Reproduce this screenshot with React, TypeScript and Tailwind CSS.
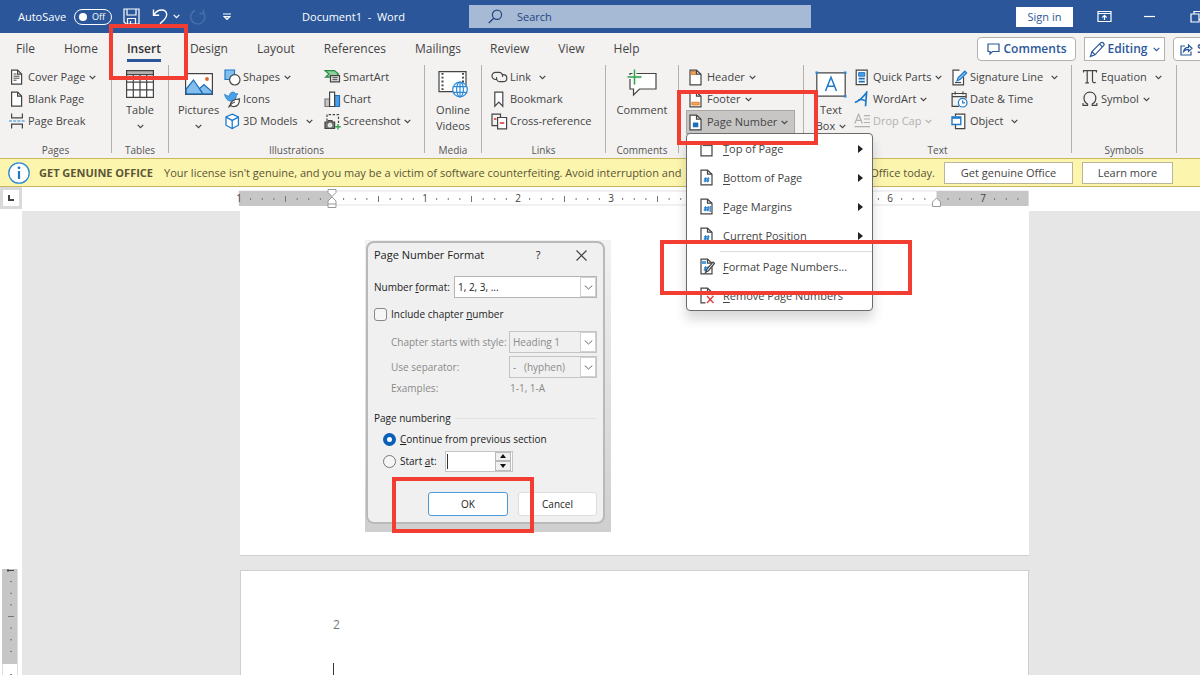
import type { ReactNode } from 'react';
import clsx from 'clsx';

const TABS = ['File', 'Home', 'Insert', 'Design', 'Layout', 'References', 'Mailings', 'Review', 'View', 'Help'];

// One inch on the ruler, in px, at the current zoom level.
const INCH = 93;

function Svg({ w, h, children, className }: { w: number; h: number; children: ReactNode; className?: string }) {
  return (
    <svg
      width={w}
      height={h}
      viewBox={`0 0 ${w} ${h}`}
      fill="none"
      stroke="#444"
      strokeWidth="1.2"
      className={clsx('shrink-0', className)}
      aria-hidden="true"
    >
      {children}
    </svg>
  );
}

function Chevron({ className }: { className?: string }) {
  return (
    <svg width="7" height="5" viewBox="0 0 7 5" fill="none" stroke="currentColor" strokeWidth="1.2" className={clsx('shrink-0', className)} aria-hidden="true">
      <path d="M0.7 0.9 3.5 3.7 6.3 0.9" />
    </svg>
  );
}

/* ---------- small ribbon icons ---------- */

function PageOutline() {
  return (
    <>
      <path d="M2.6 1.1h6l4 4v10h-10z" fill="#fff" />
      <path d="M8.6 1.1v4h4" />
    </>
  );
}

const CoverIcon = () => (
  <Svg w={16} h={16}>
    <PageOutline />
    <path d="M4.5 5h3M4.5 7.2h6M4.5 9.2h6M4.5 11.2h3" strokeWidth="1" />
  </Svg>
);

const BlankIcon = () => (
  <Svg w={16} h={16}>
    <PageOutline />
  </Svg>
);

const BreakIcon = () => (
  <Svg w={16} h={16}>
    <path d="M2.6 0.5v4.4h10.8V0.5M2.6 15.5v-4.4h10.8v4.4" />
    <path d="M0 8h16" stroke="#2b88d8" strokeDasharray="3 1.2" />
  </Svg>
);

const ShapesIcon = () => (
  <Svg w={17} h={17}>
    <path d="M1 1h9.5v9.5H1z" fill="#83beec" stroke="#1e7ac9" />
    <circle cx="10.8" cy="10.8" r="5.2" fill="#fff" />
  </Svg>
);

const IconsIcon = () => (
  <Svg w={17} h={17}>
    <path d="M0.6 3.2c1.6 1.6 3.4 2 5 1.7C5.4 2.6 7 1 9 1.1c1.3.1 2.2.7 2.7 1.6l2.3.2-1.7 1.7c0 3.4-2.4 5.4-5.6 5.4-2.8 0-5-2.2-6.1-6.6z" fill="#4ba0e8" stroke="#1e7ac9" strokeWidth="0.8" />
    <path d="M6 15.5c0-5 3-7.5 9.500-7.700.2 5-2 7.800-6 7.800-1.600 0-2.700-.8-3-2z" fill="#fff" />
    <path d="M4.500 16.500c1.500-3 3.500-4.600 6.500-5.500" />
  </Svg>
);

const CubeIcon = () => (
  <Svg w={17} h={17}>
    <path d="M8.200 1.200 14.400 4v8.200l-6.200 3.300L2 12.200V4z" fill="#fff" stroke="#1e7ac9" strokeWidth="1.300" />
    <path d="M2 4.200l6.200 3.200 6.200-3.200M8.200 7.400v8" stroke="#1e7ac9" strokeWidth="1.300" />
  </Svg>
);

const SmartArtIcon = () => (
  <Svg w={17} h={16}>
    <path d="M1 1.600h9.500l4 3.400-4 3.200H1.600L5 5z" fill="#8fd19e" stroke="#2c8c45" />
    <path d="M6.500 6.600h9v6.200h-9z" fill="#e6e6e6" />
    <path d="M8.500 8.700h5M8.500 10.700h5" strokeWidth="1" />
  </Svg>
);

const ChartIcon = () => (
  <Svg w={17} h={17}>
    <path d="M1 8h4.500v7.500H1z" fill="#c8c6c4" stroke="#777" />
    <path d="M10.500 4.500h5v11h-5z" fill="#4ba0e8" stroke="#1e6fb8" />
    <path d="M5.600 1.200h5v14.300h-5z" fill="#fff" />
  </Svg>
);

const ScreenshotIcon = () => (
  <Svg w={17} h={17}>
    <path d="M3 8V1.600h11.500V10" strokeDasharray="2.400 1.600" />
    <path d="M1 9.200h2.500l1-1.500h3.400l1 1.500h1.700v6.300H1z" fill="#777" />
    <circle cx="6" cy="12.200" r="1.900" fill="#ddd" stroke="#fff" strokeWidth="0.800" />
    <path d="M14 11v5.500M11.300 13.800h5.500" stroke="#2ea44f" strokeWidth="1.400" />
  </Svg>
);

const LinkIcon = () => (
  <Svg w={17} h={14}>
    <path d="M6 9.500H4.600a3.600 3.600 0 0 1 0-7.200h3.600a3.600 3.600 0 0 1 3.300 4.600" />
    <path d="M11 4.700h1.300a3.500 3.500 0 0 1 0 7H8.800a3.500 3.500 0 0 1-3.200-4.500" />
  </Svg>
);

const BookmarkIcon = () => (
  <Svg w={17} h={17}>
    <path d="M3.800 1.200h8v14l-4-4-4 4z" fill="#fff" />
  </Svg>
);

const CrossRefIcon = () => (
  <Svg w={17} h={17}>
    <path d="M6.500 12.600H1V1.200h8.500v3" />
    <path d="M6.600 4.500h9v11.300h-9z" fill="#fff" />
    <path d="M3 6h2.500M8.800 10h4.500" stroke="#d13438" strokeWidth="1.300" />
  </Svg>
);

const HeaderIcon = () => (
  <Svg w={16} h={17}>
    <path d="M2 1.200h6.500l4.500 4v10.600H2z" fill="#fff" />
    <path d="M3 2.500h4.800v3H3z" fill="#f2a65a" stroke="#e0761f" strokeWidth="0.800" />
    <path d="M8.500 1.200v4H13" />
  </Svg>
);

const FooterIcon = () => (
  <Svg w={16} h={17}>
    <path d="M2 1.200h6.500l4.500 4v10.600H2z" fill="#fff" />
    <path d="M8.500 1.200v4H13" />
    <path d="M3.800 11.200h7.400v2.800H3.800z" fill="#f2a65a" stroke="#e0761f" strokeWidth="0.800" />
  </Svg>
);

function HashPageIcon({ children }: { children?: ReactNode }) {
  return (
    <Svg w={16} h={17}>
      <path d="M2 1.200h6.500l4.500 4v10.600H2z" fill="#fff" />
      <path d="M8.500 1.200v4H13" />
      <path d="M6.700 8.300l-.6 5M9.300 8.300l-.6 5M5 9.800h5.400M4.700 11.800h5.400" stroke="#1e7ac9" />
      {children}
    </Svg>
  );
}

// The filled variant that the ribbon shows on its own button.
const PageNumberIcon = () => (
  <Svg w={16} h={17}>
    <path d="M2 1.200h6.500l4.500 4v10.600H2z" fill="#fff" />
    <path d="M8.500 1.200v4H13" />
    <path d="M5.600 9h4v3.600h-4zM4.800 10h5.600M4.800 11.800h5.600" fill="#1e6fb8" stroke="#1e6fb8" />
  </Svg>
);

const TopPageIcon = () => (
  <Svg w={16} h={17}>
    <path d="M2 3.200h6.500l4.500 1v11.600H2z" fill="#fff" />
    <path d="M4 3.200v2.400h9" strokeWidth="1" />
  </Svg>
);

const RemoveIcon = () => (
  <Svg w={16} h={17}>
    <path d="M6.500 15.800H2V1.200h6.500l4.500 4v3" />
    <path d="M8.500 1.200v4H13" />
    <path d="M8 9l6.500 7M14.500 9 8 16" stroke="#e03a3a" strokeWidth="1.300" />
  </Svg>
);

const QuickPartsIcon = () => (
  <Svg w={16} h={17}>
    <path d="M2.200 1.200h11v14.500h-11z" fill="#fff" />
    <path d="M4.600 3.600h6.200v3.600H4.600z" fill="#4ba0e8" stroke="#1e6fb8" strokeWidth="0.900" />
    <path d="M4.600 9.600h6.200M4.600 12.600h6.200" stroke="#1e6fb8" strokeWidth="1.600" />
  </Svg>
);

const WordArtIcon = () => (
  <Svg w={16} h={17}>
    <path d="M0.800 11.500C4.500 10.500 9.500 5.500 12.600 1.500L11.500 15.200" stroke="#1e7ac9" strokeWidth="1.700" />
    <path d="M4.200 9c2.500-.8 5-.6 7.800 1.200" stroke="#1e7ac9" strokeWidth="1.500" />
  </Svg>
);

const DropCapIcon = () => (
  <Svg w={17} h={16}>
    <path d="M0.800 10.500 4.600 1.300 8.400 10.500M2.200 7.300h4.800M10 2.600h6M10 6h6M10 9.500h6M0.500 13.600H16" stroke="#b3b0ad" />
  </Svg>
);

const SignatureIcon = () => (
  <Svg w={17} h={17}>
    <path d="M12.500 8v7.800H2V1.200h6.500" fill="#fff" />
    <path d="M4 13.500h6" />
    <path d="M6 11.800l1.200-3.300 6.600-6.300 1.800 1.800-6.500 6.600z" fill="#83beec" stroke="#1e7ac9" />
  </Svg>
);

const DateIcon = () => (
  <Svg w={17} h={17}>
    <path d="M8 15.300H1.100V2.500h14v5M1.100 5.600h14M4.200 0.500v3M12 0.500v3" />
    <circle cx="11.700" cy="11.700" r="4.300" fill="#fff" stroke="#1e7ac9" />
    <path d="M11.700 9.300v2.600h2.200" stroke="#1e7ac9" />
  </Svg>
);

const ObjectIcon = () => (
  <Svg w={17} h={17}>
    <path d="M4.500 3V1.200h9.300v14.500H4.500V12" fill="#fff" />
    <path d="M1 4h8.800v7.500H1z" fill="#fff" stroke="#1e7ac9" strokeWidth="1.400" />
    <path d="M1 4.800h8.800" stroke="#1e7ac9" strokeWidth="2" />
  </Svg>
);

const EquationIcon = () => (
  <Svg w={16} h={16}>
    <path d="M1.500 3.500V1.600h13v1.900M5.200 1.600v11.800M3.300 13.800h3.600M10.500 1.600v10.400c0 1.500 1.400 2 3.200 1.400" />
  </Svg>
);

const SymbolIcon = () => (
  <Svg w={16} h={16}>
    <path d="M1 12v2.300h4.600v-1.200C3 11.600 2 9.600 2 7.200 2 3.700 4.400 1.100 7.900 1.100s5.900 2.600 5.900 6.100c0 2.400-1 4.400-3.600 5.900v1.200h4.600V12" />
  </Svg>
);

/* ---------- large ribbon icons ---------- */

const TableIcon = () => (
  <Svg w={28} h={28}>
    <path d="M0.600 0.600h26.800v26.800H0.600z" fill="#fff" />
    <path d="M0.600 0.600h26.800v4H0.600z" fill="#b5b3b1" />
    <path d="M0.600 12.200h26.800M0.600 19.800h26.800M7.300 4.600v22.800M14 4.600v22.800M20.700 4.600v22.800" />
  </Svg>
);

const PicturesIcon = () => (
  <Svg w={28} h={22}>
    <path d="M0.600 0.600h26.800v20.800H0.600z" fill="#fff" />
    <path d="M1.200 16 8.500 7l9.500 13.800H1.200z" fill="#83beec" stroke="#1e6fb8" />
    <path d="M14.500 15.500 19 11.500l7.800 7v2.300H18z" fill="#83beec" stroke="#1e6fb8" />
    <circle cx="22" cy="6" r="1.900" fill="#e0642a" stroke="none" />
  </Svg>
);

const VideoIcon = () => (
  <Svg w={30} h={28}>
    <path d="M1 1.600h27v20H1z" fill="#fff" />
    <path d="M4.500 3v17M25 3v10" strokeDasharray="1.800 2" strokeWidth="2" />
    <circle cx="22" cy="19.500" r="7.300" fill="#fff" stroke="#2b88d8" />
    <ellipse cx="22" cy="19.500" rx="3.400" ry="7.300" stroke="#2b88d8" />
    <path d="M15.600 16.600h12.800M15.600 22.400h12.800M22 12v15" stroke="#2b88d8" />
  </Svg>
);

const CommentIcon = () => (
  <Svg w={31} h={30}>
    <path d="M3 4.500h26V20H12.500L6.500 26V20H3z" fill="#fff" />
    <path d="M7.500 0.500v15M0.500 8h14" stroke="#f3f2f1" strokeWidth="4" />
    <path d="M7.500 0.500v15M0.500 8h14" stroke="#2ea44f" strokeWidth="1.400" />
  </Svg>
);

const TextBoxIcon = () => (
  <Svg w={32} h={27}>
    <path d="M1.800 1.800h28.400v23.400H1.800z" fill="#fff" />
    <path d="M10.500 20 16 6.200 21.500 20M12.400 15.300h7.200" stroke="#1e7ac9" strokeWidth="1.500" />
    <path d="M0.500 0.500h2.600v2.600H0.500zM28.900 0.500h2.600v2.600h-2.600zM0.500 23.900h2.600v2.600H0.500zM28.900 23.900h2.600v2.600h-2.600z" fill="#2b88d8" stroke="none" />
  </Svg>
);

/* ---------- ribbon building blocks ---------- */

function Group({ label, className, children }: { label: string; className?: string; children: ReactNode }) {
  return (
    <section aria-label={label} className={clsx('flex h-[92px] shrink-0 flex-col', className)}>
      <div className="relative flex h-[88px] border-r border-[#b3b1af] pt-px">
        {children}
        <span className="absolute inset-x-0 -bottom-1 text-center text-[10px] leading-[14px] text-[#555]">{label}</span>
      </div>
    </section>
  );
}

interface ToolProps {
  icon: ReactNode;
  label: string;
  menu?: boolean;
  wide?: boolean;
  disabled?: boolean;
}

function Tool({ icon, label, menu, wide, disabled }: ToolProps) {
  return (
    <button
      disabled={disabled}
      className={clsx('flex h-[22px] items-center whitespace-nowrap', disabled ? 'text-[#b3b0ad]' : 'text-[#444]')}
    >
      <span className="flex w-[19px] justify-start">{icon}</span>
      {label}
      {menu && <Chevron className={wide ? 'ml-2' : 'ml-1'} />}
    </button>
  );
}

function BigTool({ icon, children, menu }: { icon: ReactNode; children: ReactNode; menu?: boolean }) {
  return (
    <button className="flex w-full flex-col items-center self-start text-center leading-4 text-[#444]">
      <span className="flex h-9 items-center justify-center">{icon}</span>
      {children}
      {menu && <Chevron className="mt-1.5" />}
    </button>
  );
}

/* ---------- page parts ---------- */

function TitleBar() {
  return (
    <header className="flex h-[33px] shrink-0 items-center overflow-hidden bg-[#2b579a] text-white">
      <div className="flex w-[469px] shrink-0 items-center pl-[18px]">
        <label className="flex items-center gap-2" htmlFor="autosave">
          AutoSave
          <span className="relative flex h-4 w-[38px] items-center justify-between rounded-full border border-white pl-1 pr-1.5 text-[9px] leading-none">
            <input id="autosave" type="checkbox" className="absolute inset-0 m-0 appearance-none" />
            <span className="h-2 w-2 rounded-full bg-white" />
            Off
          </span>
        </label>
        <button aria-label="Save" className="ml-[11px]">
          <Svg w={17} h={17}>
            <path d="M1 1h15v15H3l-2-2zM4 1v6h9V1M4.500 16v-5.500h8V16M7.500 13v3" stroke="#fff" />
          </Svg>
        </button>
        <button aria-label="Undo" className="ml-3">
          <Svg w={16} h={17}>
            <path d="M1.500 1.500v5.700h5.700M1.800 7C4 3.400 6.500 2 9.500 2c3.200 0 5.200 2 5.200 4.800 0 2-1.200 3.600-2.500 4.900L8 15.800" stroke="#fff" strokeWidth="1.400" />
          </Svg>
        </button>
        <Chevron className="ml-[5px]" />
        <button aria-label="Redo" disabled className="ml-2.5">
          <Svg w={17} h={17}>
            <path d="M13.500 1.500v4h-4M5 2.500A7 7 0 1 0 13.500 5" stroke="#4a70ad" strokeWidth="1.400" />
          </Svg>
        </button>
        <button aria-label="Customize toolbar" className="ml-4">
          <Svg w={8} h={8}>
            <path d="M0 1h8M1.200 3.600h5.600L4 6.500z" stroke="#fff" />
          </Svg>
        </button>
        <span className="ml-[71px] whitespace-pre">Document1  -  Word</span>
      </div>
      <label className="flex h-[23px] flex-1 items-center bg-[#a6b9d5] pl-[19px] text-[#24477f]">
        <Svg w={15} h={15}>
          <circle cx="9" cy="5.800" r="4.600" stroke="#24477f" />
          <path d="M5.700 9.200.8 14" stroke="#24477f" strokeWidth="1.400" />
        </Svg>
        <input aria-label="Search" placeholder="Search" className="ml-3.5 w-full bg-transparent outline-none placeholder:text-[#24477f]" />
      </label>
      <div className="flex w-[389px] shrink-0 items-center justify-end">
        <button className="h-5 w-[57px] shrink-0 bg-white text-[#2b579a]">Sign in</button>
        <button aria-label="Ribbon display options" className="ml-6 shrink-0">
          <Svg w={15} h={13}>
            <path d="M1 1.500h13v10H1zM1 3.500h13M7.500 10V5.500M5.200 7.600l2.300-2.200 2.300 2.200" stroke="#fff" />
          </Svg>
        </button>
        <button aria-label="Minimize" className="ml-8 shrink-0">
          <Svg w={12} h={3}>
            <path d="M0 1.500h11" stroke="#fff" />
          </Svg>
        </button>
        <button aria-label="Restore" className="ml-[34px] w-2.5 shrink-0 overflow-hidden">
          <Svg w={13} h={13}>
            <path d="M1 4h8v8H1zM4 4V1.500h8v8H9" stroke="#fff" />
          </Svg>
        </button>
      </div>
    </header>
  );
}

function TabRow() {
  return (
    <div className="flex h-8 shrink-0 items-center overflow-hidden">
      <nav className="flex shrink-0 gap-[29px] pl-4 text-xs text-[#444]">
        {TABS.map((tab) => (
          <a
            key={tab}
            href={`#${tab.toLowerCase()}`}
            className={clsx('flex h-[26px] items-center border-y-[3px] border-transparent', tab === 'Insert' && 'border-b-[#2b579a] font-semibold text-[#333]')}
          >
            {tab}
          </a>
        ))}
      </nav>
      <div className="ml-auto flex w-[223px] shrink-0 gap-2 overflow-hidden text-xs font-semibold text-[#2b579a]">
        <button className="flex h-6 w-[99px] shrink-0 items-center justify-center gap-1 rounded border border-[#b3b1af] bg-white">
          <Svg w={13} h={12}>
            <path d="M1 1h11v7.500H5.500L3 11V8.500H1z" stroke="#2b579a" />
          </Svg>
          Comments
        </button>
        <button className="flex h-6 w-[81px] shrink-0 items-center justify-center gap-0.5 border border-[#b3b1af] bg-white">
          <Svg w={17} h={17}>
            <path d="M1.500 15.500 3 10.500 11.800 1.700q1.300-1 2.600.3t.2 2.600L6 13.800zM3 10.500l3 3.300M10.500 3l2.800 2.800" stroke="#2b579a" />
          </Svg>
          Editing
          <Chevron className="ml-1" />
        </button>
        <button className="flex h-6 w-[80px] shrink-0 items-center gap-1 rounded border border-[#b3b1af] bg-white pl-1.5">
          <Svg w={13} h={13}>
            <path d="M5 3H1v9h10V8.500M3.500 8.500C4 5.500 6 4.300 8.500 4.300V2l3.500 3.300L8.500 8.500V6.300c-2 0-3.500.5-5 2.200z" stroke="#2b579a" />
          </Svg>
          Share
        </button>
      </div>
    </div>
  );
}

const MENU = [
  { icon: <TopPageIcon />, label: 'Top of Page', sub: true },
  { icon: <HashPageIcon />, label: 'Bottom of Page', sub: true },
  { icon: <HashPageIcon><path d="M11.200 8v6" stroke="#1e7ac9" /></HashPageIcon>, label: 'Page Margins', sub: true },
  { icon: <HashPageIcon />, label: 'Current Position', sub: true },
  {
    icon: (
      <HashPageIcon>
        <path d="M3 3h4v3H3z" fill="#4ba0e8" stroke="none" />
        <path d="M6.500 14.500 8 11l6-7 1.500 1.300-5.800 7.200z" fill="#fff" />
      </HashPageIcon>
    ),
    label: 'Format Page Numbers...',
    sub: false,
  },
  { icon: <RemoveIcon />, label: 'Remove Page Numbers', sub: false },
];

function PageNumberMenu() {
  return (
    <ul role="menu" className="absolute left-[7px] top-[68px] z-10 w-[187px] rounded border border-[#6b6b6b] bg-white text-[#444] shadow-[0_8px_12px_rgba(0,0,0,0.16)]">
      {MENU.map((item, i) => (
        <li key={item.label} role="none" className={clsx(i === 4 && 'mt-0.5')}>
          {i === 4 && <div className="-mt-px ml-[33px] border-t border-[#dcdcdc]" />}
          <button role="menuitem" className="flex h-[29px] w-full items-center pl-3">
            <span className="w-6">{item.icon}</span>
            <span className="whitespace-nowrap">
              <u className="underline-offset-2">{item.label[0]}</u>
              {item.label.slice(1)}
            </span>
            {item.sub && (
              <svg width="5" height="8" viewBox="0 0 5 8" className="ml-auto mr-[9px]" aria-hidden="true">
                <path d="M0 0l5 4-5 4z" fill="#222" />
              </svg>
            )}
          </button>
        </li>
      ))}
    </ul>
  );
}

function Ribbon() {
  return (
    <div className="flex h-[93px] shrink-0">
      <Group label="Pages" className="w-[112px]">
        <div className="pl-[9px]">
          <Tool icon={<CoverIcon />} label="Cover Page" menu />
          <Tool icon={<BlankIcon />} label="Blank Page" />
          <Tool icon={<BreakIcon />} label="Page Break" />
        </div>
      </Group>
      <Group label="Tables" className="w-[57px]">
        <BigTool icon={<TableIcon />} menu>Table</BigTool>
      </Group>
      <Group label="Illustrations" className="w-64">
        <div className="w-[55px] pl-1">
          <BigTool icon={<PicturesIcon />} menu>Pictures</BigTool>
        </div>
        <div className="w-[100px]">
          <Tool icon={<ShapesIcon />} label="Shapes" menu />
          <Tool icon={<IconsIcon />} label="Icons" />
          <Tool icon={<CubeIcon />} label="3D Models" menu wide />
        </div>
        <div>
          <Tool icon={<SmartArtIcon />} label="SmartArt" />
          <Tool icon={<ChartIcon />} label="Chart" />
          <Tool icon={<ScreenshotIcon />} label="Screenshot" menu />
        </div>
      </Group>
      <Group label="Media" className="w-[57px]">
        <BigTool icon={<VideoIcon />}>
          <span>Online</span>
          <span>Videos</span>
        </BigTool>
      </Group>
      <Group label="Links" className="w-[124px]">
        <div className="pl-[9px]">
          <Tool icon={<LinkIcon />} label="Link" menu wide />
          <Tool icon={<BookmarkIcon />} label="Bookmark" />
          <Tool icon={<CrossRefIcon />} label="Cross-reference" />
        </div>
      </Group>
      <Group label="Comments" className="w-[73px]">
        <BigTool icon={<CommentIcon />}>Comment</BigTool>
      </Group>
      <Group label="Header & Footer" className="w-[125px]">
        <div className="pl-[7px]">
          <div className="pl-0.5">
            <Tool icon={<HeaderIcon />} label="Header" menu />
            <Tool icon={<FooterIcon />} label="Footer" menu />
          </div>
          <div className="border border-[#a8a6a4] bg-[#c8c6c4] pl-px pr-1.5">
            <Tool icon={<PageNumberIcon />} label="Page Number" menu />
          </div>
        </div>
        <PageNumberMenu />
      </Group>
      <Group label="Text" className="w-[268px]">
        <div className="w-[50px] pl-1">
          <BigTool icon={<TextBoxIcon />}>
            <span>Text</span>
            <span className="flex items-center gap-1">
              Box <Chevron />
            </span>
          </BigTool>
        </div>
        <div className="w-[97px]">
          <Tool icon={<QuickPartsIcon />} label="Quick Parts" menu />
          <Tool icon={<WordArtIcon />} label="WordArt" menu />
          <Tool icon={<DropCapIcon />} label="Drop Cap" menu disabled />
        </div>
        <div>
          <Tool icon={<SignatureIcon />} label="Signature Line" menu wide />
          <Tool icon={<DateIcon />} label="Date & Time" />
          <Tool icon={<ObjectIcon />} label="Object" menu wide />
        </div>
      </Group>
      <Group label="Symbols" className="w-[105px]">
        <div className="pl-2.5">
          <Tool icon={<EquationIcon />} label="Equation" menu wide />
          <Tool icon={<SymbolIcon />} label="Symbol" menu />
        </div>
      </Group>
    </div>
  );
}

function LicenseBar() {
  return (
    <div className="flex h-[29px] shrink-0 items-center overflow-hidden border-y border-[#c8b75e] bg-[#fcf5ae] pl-2 text-[#5a5636]">
      <svg width="22" height="22" viewBox="0 0 22 22" className="shrink-0" aria-hidden="true">
        <circle cx="11" cy="11" r="10.200" fill="#fff" stroke="#2b88d8" strokeWidth="1.300" />
        <path d="M11 9v8" stroke="#1e7ac9" strokeWidth="2.200" />
        <circle cx="11" cy="5.800" r="1.400" fill="#1e7ac9" />
      </svg>
      <strong className="ml-[9px] w-[125px] shrink-0 whitespace-nowrap font-bold">GET GENUINE OFFICE</strong>
      <p className="flex w-[771px] shrink-0 justify-between whitespace-nowrap">
        <span>Your license isn't genuine, and you may be a victim of software counterfeiting. Avoid interruption and</span>
        <span>keep your files safe with genuine Office today.</span>
      </p>
      <button className="ml-[9px] h-[22px] w-[129px] shrink-0 border border-[#b9b59a] bg-white text-[#444]">Get genuine Office</button>
      <button className="ml-[9px] h-[22px] w-[91px] shrink-0 border border-[#b9b59a] bg-white text-[#444]">Learn more</button>
    </div>
  );
}

function HorizontalRuler() {
  const ticks = Array.from({ length: 67 }, (_, i) => i - 7).filter((i) => i !== 0 && i !== 52);
  return (
    <svg width="800" height="24" className="ml-[212px]" aria-hidden="true">
      <g transform="translate(98 0)">
        <path d={`M${-INCH} 4h789v14h-789z`} fill="#fff" stroke="#e3e3e3" />
        <path d={`M${-INCH} 4H0v15h${-INCH}zM${INCH * 6.5} 4h92v15h-92z`} fill="#c6c6c6" />
        {ticks.map((i) => {
          const x = (i * INCH) / 8;
          if (i % 8 === 0) {
            return (
              <text key={i} x={x} y="15" textAnchor="middle" fontSize="10" fill="#444">
                {Math.abs(i / 8)}
              </text>
            );
          }
          return <path key={i} d={i % 4 === 0 ? `M${x} 9v6` : `M${x} 11v2`} stroke="#777" />;
        })}
        <text x={-INCH} y="15" textAnchor="middle" fontSize="10" fill="#444">1</text>
        <path d="M-4 2.500h8v3l-4 4-4-4zM0 10l4 4v6.500h-8V14zM-4 17h8" fill="#fff" stroke="#999" />
        <path d="M604.500 11l4 4v4.500h-8V15z" fill="#fff" stroke="#999" />
      </g>
    </svg>
  );
}

function VerticalRuler() {
  return (
    <svg width="16" height="110" className="ml-0.5 mt-[358px]" aria-hidden="true">
      <path d="M0.500 0v110M15.500 0v110" stroke="#ddd" />
      <path d="M0 0h15v95H0z" fill="#c6c6c6" />
      <path d="M5 1.500h7M6 0v3" stroke="#444" />
      {[1, 2, 3, 4, 5, 6, 7, 9].map((i) => {
        const y = 1 + (i * INCH) / 8;
        return <path key={i} d={i === 4 ? `M6 ${y}h6` : `M8 ${y}h2`} stroke="#777" />;
      })}
    </svg>
  );
}

/* ---------- Page Number Format dialog ---------- */

function Combo({ id, value, disabled, className }: { id: string; value: string; disabled?: boolean; className?: string }) {
  return (
    <span className={clsx('relative flex h-[22px] shrink-0 border', disabled ? 'border-[#c4c4c4] text-[#8a8a8a]' : 'border-[#b5b5b5] bg-white', className)}>
      <select id={id} disabled={disabled} className="w-full appearance-none whitespace-pre bg-transparent pl-[3px] opacity-100">
        <option>{value}</option>
      </select>
      <span className="pointer-events-none absolute inset-y-0 right-0 flex w-4 items-center justify-center border border-[#d0d0d0] bg-white text-[#666]">
        <svg width="9" height="5" viewBox="0 0 9 5" fill="none" stroke="currentColor" aria-hidden="true">
          <path d="M0.700 0.500 4.500 4 8.300 0.500" />
        </svg>
      </span>
    </span>
  );
}

function FormatDialog() {
  return (
    <div className="ml-[125px] mt-[29px] h-[292px] w-[246px] bg-gradient-to-b from-[#f2f2f2] to-[#cfcfcf] pl-px pt-px">
      <form
        role="dialog"
        aria-label="Page Number Format"
        className="flex h-[283px] w-[239px] flex-col rounded-lg border-2 border-[#b9b9b9] bg-[#f0f0f0] px-1.5 text-[10px] text-[#222]"
      >
        <div className="flex h-6 shrink-0 items-center text-[11px]">
          <h2 className="w-[158px]">Page Number Format</h2>
          <button type="button" aria-label="Help" className="w-3">?</button>
          <button type="button" aria-label="Close" className="ml-8">
            <Svg w={11} h={11}>
              <path d="M0.500 0.500l10 10M10.500 0.500l-10 10" />
            </Svg>
          </button>
        </div>
        <div className="mt-[9px] flex items-center justify-between">
          <label htmlFor="number-format" className="whitespace-nowrap">
            Number <u>f</u>ormat:
          </label>
          <Combo id="number-format" value="1, 2, 3, ..." className="w-[143px]" />
        </div>
        <label className="mt-[7px] flex h-[18px] items-center gap-1">
          <input type="checkbox" className="h-[13px] w-[13px] appearance-none rounded-[3px] border border-[#888] bg-[#f6f6f6]" />
          <span>
            Include chapter <u>n</u>umber
          </span>
        </label>
        <div className="mt-2 flex items-center justify-between pl-[17px] text-[#8a8a8a]">
          <label htmlFor="chapter-style" className="whitespace-nowrap">Chapter starts with style:</label>
          <Combo id="chapter-style" value="Heading 1" disabled className="w-[88px]" />
        </div>
        <div className="mt-[3px] flex items-center justify-between pl-[17px] text-[#8a8a8a]">
          <label htmlFor="separator">Use separator:</label>
          <Combo id="separator" value={'-\u00a0\u00a0\u00a0(hyphen)'} disabled className="w-[88px]" />
        </div>
        <div className="flex h-5 items-center pl-[17px] text-[#8a8a8a]">
          <span className="w-[119px]">Examples:</span>
          <span>1-1, 1-A</span>
        </div>
        <div className="mt-2.5 flex h-5 items-center gap-1">
          Page numbering
          <span className="h-px flex-1 bg-[#e2e2e2]" />
        </div>
        <label className="flex h-[22px] items-center gap-1 pl-[9px]">
          <input type="radio" name="numbering" defaultChecked className="h-[13px] w-[13px] appearance-none rounded-full border-4 border-[#0a5fb8] bg-white" />
          <span>
            <u>C</u>ontinue from previous section
          </span>
        </label>
        <div className="flex h-[22px] items-center pl-[9px]">
          <label className="flex w-[62px] items-center gap-1">
            <input type="radio" name="numbering" className="h-[13px] w-[13px] appearance-none rounded-full border border-[#777] bg-[#f6f6f6]" />
            <span>
              Start <u>a</u>t:
            </span>
          </label>
          <span className="flex h-[21px] w-[68px] border border-[#c4c4c4] bg-white pl-px">
            <span className="my-0.5 w-px bg-[#333]" />
            <input aria-label="Start at" className="w-[47px] bg-transparent outline-none" />
            <span className="flex w-4 flex-col">
              <button type="button" aria-label="Increase" className="flex flex-1 items-center justify-center border border-[#b9b9b9] bg-[#f0f0f0]">
                <svg width="6" height="4" aria-hidden="true"><path d="M0 4l3-4 3 4z" fill="#111" /></svg>
              </button>
              <button type="button" aria-label="Decrease" className="flex flex-1 items-center justify-center border border-[#b9b9b9] bg-[#f0f0f0]">
                <svg width="6" height="4" aria-hidden="true"><path d="M0 0h6L3 4z" fill="#111" /></svg>
              </button>
            </span>
          </span>
        </div>
        <div className="mt-5 flex justify-end gap-2.5">
          <button type="button" className="h-6 w-20 rounded-[3px] border border-[#4a9bdc] bg-white">OK</button>
          <button type="button" className="h-6 w-[79px] rounded-[3px] border border-[#dedede] bg-white">Cancel</button>
        </div>
      </form>
    </div>
  );
}

function Highlight({ className }: { className: string }) {
  return <div className={clsx('pointer-events-none absolute z-20 border-4 border-[#f23d33]', className)} />;
}

export default function App() {
  return (
    <div className="relative flex h-screen flex-col overflow-hidden bg-white font-['Open_Sans','Noto_Sans',sans-serif] text-[11px] leading-4">
      <TitleBar />
      <div className="bg-[#f3f2f1]">
        <TabRow />
        <Ribbon />
      </div>
      <LicenseBar />
      <div className="flex h-6 shrink-0">
        <div className="flex h-[22px] w-[22px] shrink-0 items-center justify-center border-[3px] border-[#dadada]">
          <Svg w={6} h={6}>
            <path d="M1 0v5h5" strokeWidth="2" />
          </Svg>
        </div>
        <HorizontalRuler />
      </div>
      <main className="flex min-h-0 flex-1">
        <div className="w-[22px] shrink-0">
          <VerticalRuler />
        </div>
        <div className="flex flex-1 flex-col bg-[#e6e6e6] pl-[218px]">
          <article className="h-[345px] w-[789px] shrink-0 border-b border-[#cfcfcf] bg-white">
            <FormatDialog />
          </article>
          <article className="mt-3.5 w-[789px] flex-1 border border-b-0 border-[#cfcfcf] bg-white pl-[92px] pt-[46px] text-[#777]">
            <p className="text-xs">2</p>
            <div className="mt-[30px] h-4 w-px bg-[#333]" />
          </article>
        </div>
      </main>

      <Highlight className="left-[109px] top-6 h-14 w-[79px]" />
      <Highlight className="left-[677px] top-[90px] h-[55px] w-[141px]" />
      <Highlight className="left-[660px] top-60 h-[55px] w-[252px]" />
      <Highlight className="left-[392px] top-[477px] h-14 w-[142px]" />
    </div>
  );
}
